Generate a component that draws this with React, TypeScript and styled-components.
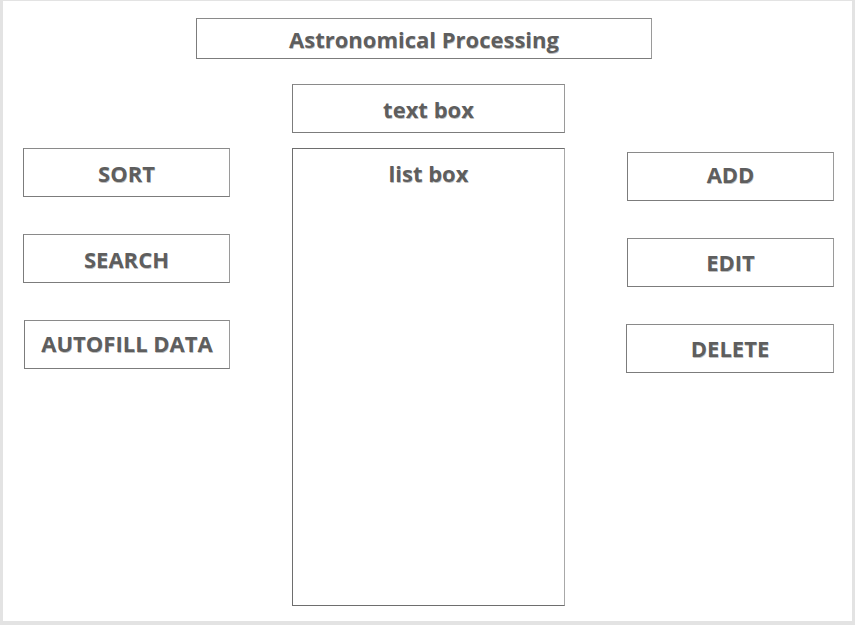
import styled, { createGlobalStyle } from "styled-components"

const GlobalStyle = createGlobalStyle`
    html, body {
        margin: 0;
        padding: 0;
        background: #e3e3e3;
    }
    body {
        font-family: "Open Sans", "Noto Sans", "Liberation Sans", sans-serif;
    }
`

// label, horizontal nudge, text nudge (px, negative = up)
const leftButtons: [string, number, number][] = [
    ["SORT", 0, 0],
    ["SEARCH", 0, 0],
    ["AUTOFILL DATA", 1, -2],
]
const rightButtons: [string, number, number][] = [
    ["ADD", 0, -3],
    ["EDIT", 0, -1],
    ["DELETE", -1, -1],
]

export default function App() {
    return (
        <>
            <GlobalStyle />
            <Slide>
                <TitleRow>
                    <Box $height={41}>Astronomical Processing</Box>
                </TitleRow>
                <Body>
                    <SideColumn $top={64}>
                        {leftButtons.map(([label, shift, lift]) => (
                            <Box key={label} $height={49} $shift={shift} $lift={lift}>{label}</Box>
                        ))}
                    </SideColumn>
                    <CenterColumn>
                        <Box $height={49}>text box</Box>
                        <ListBox>list box</ListBox>
                    </CenterColumn>
                    <SideColumn $top={68}>
                        {rightButtons.map(([label, shift, lift]) => (
                            <Box key={label} $height={49} $shift={shift} $lift={lift}>{label}</Box>
                        ))}
                    </SideColumn>
                </Body>
            </Slide>
        </>
    )
}

const Slide = styled.div`
    box-sizing: border-box;
    width: 849px;
    height: 620px;
    margin: 1px 0 0 3px;
    background: #fff;
    padding: 17px 19px 0 20px;
`

const TitleRow = styled.div`
    display: flex;
    justify-content: flex-start;
    padding-left: 173px;
    & > div {
        width: 456px;
    }
`

const Box = styled.div<{ $height: number; $shift?: number; $lift?: number }>`
    box-sizing: border-box;
    height: ${p => p.$height}px;
    border: 1px solid #7c7c7c;
    border-top-color: #8a8a8a;
    border-right-color: #9a9a9a;
    display: flex;
    align-items: center;
    justify-content: center;
    padding-top: ${p => Math.max(0, 1 + (p.$lift ?? 0) * 2)}px;
    padding-bottom: ${p => Math.max(0, -1 - (p.$lift ?? 0) * 2)}px;
    margin-left: ${p => p.$shift ?? 0}px;
    color: #5e5e5e;
    font-weight: 700;
    font-size: 22px;
    letter-spacing: 0;
    text-shadow: 0.5px 0.5px 0.5px rgba(0, 0, 0, 0.25);
`

const Body = styled.div`
    display: grid;
    grid-template-columns: 207px 273px 207px;
    column-gap: 62px;
    margin-top: 25px;
`

const SideColumn = styled.div<{ $top: number }>`
    display: flex;
    flex-direction: column;
    gap: 37px;
    padding-top: ${p => p.$top}px;
`

const CenterColumn = styled.div`
    display: flex;
    flex-direction: column;
    gap: 15px;
`

const ListBox = styled.div`
    box-sizing: border-box;
    height: 458px;
    border: 1px solid #6e6e6e;
    border-right-color: #a8a8a8;
    text-align: center;
    padding-top: 9px;
    color: #5e5e5e;
    font-weight: 700;
    font-size: 22px;
    text-shadow: 0.5px 0.5px 0.5px rgba(0, 0, 0, 0.25);
`
